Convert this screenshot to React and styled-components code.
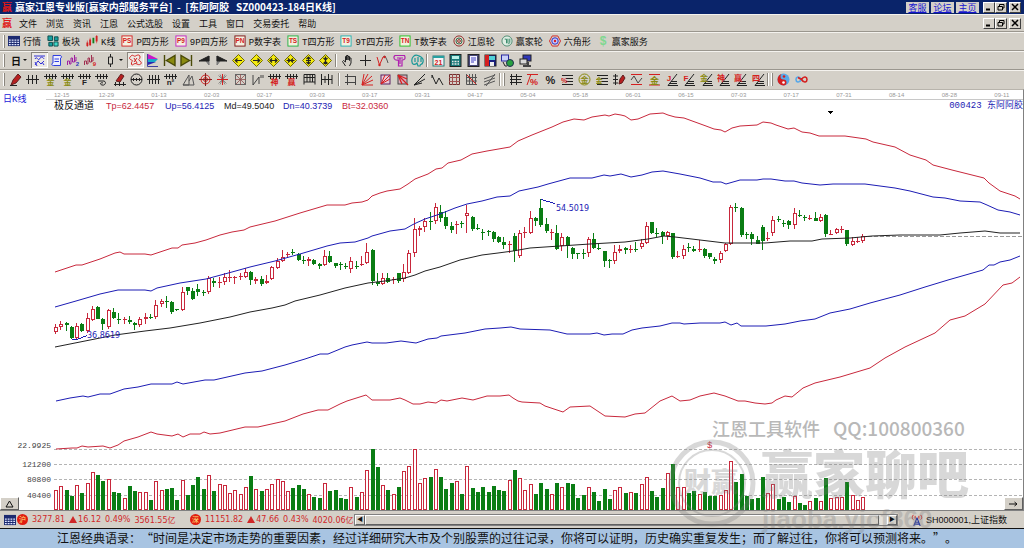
import React from 'react';
import styled, { createGlobalStyle } from 'styled-components';

const UP = '#c8283c';
const DOWN = '#0a7d14';
const BLUE = '#1c1cb4';

// direction, body top, body bottom, high, low, volume
const CANDLES = `
r 327 332 324 334 19;r 324 327 321 330 23;g 323 325 322 331 20;g 327 338 326 339 14;r 326 338 323 339 24
g 324 331 323 332 17;r 318 331 313 333 26;r 309 320 306 321 37;g 307 319 306 319 35;g 319 324 318 330 29
r 310 327 309 329 30;g 312 318 308 319 18;g 319 320 313 324 17;r 319 320 317 324 11;g 320 322 316 324 24
g 323 325 322 330 19;r 319 325 317 327 17;r 317 319 313 324 17;g 317 318 314 319 10;r 305 317 300 319 28
r 301 304 299 307 19;g 301 302 296 308 21;g 302 312 301 314 22;g 309 310 309 311 10;r 292 310 287 311 29
g 287 291 287 295 15;g 291 299 288 300 25;g 289 292 284 296 33;g 292 293 290 296 21;r 278 292 276 294 34
g 281 283 278 287 19;r 282 283 277 288 25;r 277 282 273 285 24;r 277 278 270 282 16;r 277 278 276 284 19
r 276 277 273 280 15;r 272 277 268 278 22;g 272 280 271 285 34;r 279 281 277 284 20;g 279 284 276 286 19
r 281 283 275 284 20;r 267 279 266 280 25;r 261 268 258 269 30;r 257 261 250 262 28;r 254 255 252 257 18
g 252 253 249 255 22;g 254 260 253 261 25;g 260 261 256 264 21;r 259 261 257 266 15;g 260 264 259 265 13
g 264 266 263 269 12;r 256 265 250 266 26;g 256 262 251 263 19;g 263 266 263 268 20;g 264 265 262 270 12
g 266 267 263 269 11;r 261 269 257 273 22;g 266 267 261 269 13;r 264 265 256 266 17;r 252 263 243 264 39
g 250 281 249 285 61;g 282 284 273 286 43;r 278 284 273 285 24;g 278 282 273 283 20;r 279 280 277 284 15
g 273 281 273 283 23;r 272 279 264 282 38;r 253 273 250 274 43;r 229 253 218 257 60;r 228 230 226 236 26
r 221 227 218 232 31;g 221 222 212 230 33;r 207 221 203 224 40;g 212 218 205 222 33;g 217 226 211 229 21
g 226 230 222 233 27;r 224 225 221 234 28;g 223 224 221 228 16;r 213 216 205 233 43;g 217 229 216 231 22
g 228 229 224 230 18;g 232 233 229 240 23;g 231 232 230 236 18;g 232 239 231 242 24;g 237 242 236 243 20
g 242 245 237 249 19;r 244 245 241 253 29;g 236 251 233 262 40;r 233 256 230 258 31;r 232 233 227 238 19
r 218 233 211 234 25;g 218 221 217 226 16;g 208 225 199 227 27;g 224 231 218 233 21;r 232 233 229 240 15
g 233 249 225 250 27;r 237 246 233 251 22;g 237 246 236 258 27;g 248 254 247 259 26;g 253 254 253 259 12
g 253 254 249 259 15;r 239 253 237 257 22;g 239 248 233 249 18;g 248 249 244 250 9;g 251 261 251 267 21
g 260 261 259 268 11;r 252 261 245 264 19;r 249 251 245 253 22;g 248 250 247 254 17;r 249 250 245 253 17
g 249 250 242 252 17;r 243 247 239 249 25;r 226 243 222 244 32;g 222 233 222 234 19;g 233 234 228 237 13
g 232 236 231 244 22;r 232 236 231 240 36;g 233 257 233 259 46;r 256 257 251 258 22;r 249 256 245 259 22
g 247 248 243 252 17;g 249 251 246 252 19;r 249 250 240 252 15;g 249 256 248 258 18;g 253 257 253 259 14
g 259 261 257 264 14;r 253 260 251 263 14;r 244 251 243 252 19;r 207 244 205 245 48;g 207 208 203 212 28
g 208 235 207 237 36;g 234 235 232 239 14;g 234 239 232 245 11;g 240 244 236 244 12;g 227 241 225 250 33
r 238 239 232 241 16;r 220 233 216 236 25;g 219 220 216 222 11;g 223 224 220 227 13;g 221 225 220 229 8
r 213 225 208 229 13;g 215 216 210 217 7;g 217 218 215 221 5;r 218 219 215 220 8;g 218 221 212 221 12
r 217 221 214 222 8;g 215 234 214 237 32;r 234 235 230 235 11;r 229 233 228 234 12;r 229 230 226 233 12
g 230 244 230 246 28;r 241 245 237 246 14;r 241 242 237 243 9;r 236 241 234 243 12
`.trim().split(/[;\n]/).map((row) => {
  const [dir, ...n] = row.split(' ');
  const [top, bottom, high, low, volume] = n.map(Number);
  return { dir, top, bottom, high, low, volume };
});

const BANDS = [
  { name: 'Tp', color: UP, points: '55,272 76,265 82,265 100,259 115,253 120,252 124,254 145,254 151,255 160,252 172,248 178,248 182,245 195,243 206,240 220,235 232,232 244,230 250,227 275,221 300,213 327,205 345,205 352,203 362,202 368,200 372,196 380,193 387,191 400,189 408,184 415,179 428,174 436,169 442,168 448,163 461,160 472,154 487,151 510,147 518,141 532,135 542,131 552,127 563,122 574,119 584,120 592,117 605,115 609,116 615,114 621,115 625,116 631,120 638,119 650,114 663,113 668,115 675,117 684,118 695,122 706,126 714,129 721,130 725,132 732,128 740,126 757,125 763,122 771,123 776,125 788,129 794,128 802,132 810,133 819,136 845,136 866,139 873,142 895,147 910,155 926,160 933,165 952,170 984,178 989,183 1000,191 1015,196 1020,199' },
  { name: 'Up', color: BLUE, points: '55,307 76,301 100,294 118,290 145,290 151,291 157,288 180,283 206,279 232,272 250,267 275,261 300,254 327,246 340,243 355,242 368,238 372,236 390,231 405,229 412,225 416,223 425,219 440,214 455,208 467,204 482,201 497,197 510,196 519,191 538,187 548,184 570,178 592,178 604,175 610,176 621,174 631,177 642,175 652,172 663,171 680,174 700,178 713,182 721,182 726,184 740,180 757,180 763,179 771,179 785,181 794,181 802,183 820,185 833,184 865,184 895,188 910,191 933,197 945,198 960,201 980,202 987,205 998,210 1010,212 1020,215' },
  { name: 'Md', color: '#222', points: '55,347 75,343 100,338 115,335 145,331 170,328 200,323 230,317 250,312 272,308 285,305 295,301 320,295 345,288 368,283 385,281 405,278 415,275 425,271 440,267 460,260 482,255 498,253 513,251 530,248 560,246 590,244 625,242 648,239 664,236 675,237 700,240 725,243 765,243 790,241 812,241 822,239 850,238 872,236 900,235 940,235 960,233 985,231 1000,233 1020,233' },
  { name: 'Dn', color: BLUE, points: '56,401 70,398 83,396 88,397 100,394 110,394 124,389 138,387 151,384 172,384 177,382 183,384 205,380 214,380 245,373 262,371 285,365 305,359 320,354 328,354 345,347 352,345 367,342 372,343 386,343 401,341 416,343 428,339 437,338 441,336 465,333 485,329 500,328 511,327 520,329 550,330 567,334 590,334 597,333 604,335 612,334 623,334 632,330 642,328 660,326 672,323 680,323 684,324 700,323 720,323 725,322 731,325 737,323 741,326 766,326 785,324 800,321 815,319 830,313 850,309 870,303 900,295 925,287 948,280 983,270 989,265 994,265 1000,262 1010,260 1020,256' },
  { name: 'Bt', color: UP, points: '56,449 72,448 77,448 82,446 88,447 103,446 110,448 118,445 124,441 138,437 151,432 157,434 172,436 178,434 183,437 190,434 200,434 204,432 210,434 220,433 245,427 258,427 285,421 303,414 318,410 328,410 340,404 347,401 366,395 372,400 390,400 400,398 405,400 413,404 420,404 428,402 436,403 441,400 447,401 462,398 473,400 487,396 500,396 509,395 513,398 518,401 522,402 540,403 545,406 557,410 563,412 570,407 590,406 605,416 625,417 635,414 645,413 660,401 672,396 680,401 690,400 700,396 714,393 725,396 738,401 745,401 755,403 765,404 772,403 776,400 785,396 792,397 803,388 815,383 840,377 870,368 885,358 905,347 935,333 950,320 965,316 985,304 1003,285 1012,283 1020,277' },
];

const DATES = ['12-15', '12-29', '01-13', '02-03', '02-17', '03-03', '03-17', '03-31', '04-17', '05-04', '05-18', '06-01', '06-15', '07-03', '07-17', '07-31', '08-14', '08-28', '09-11'];
const MENUS = ['文件', '浏览', '资讯', '江恩', '公式选股', '设置', '工具', '窗口', '交易委托', '帮助'];
const LEVELS = [[449, '22.9925'], [464, '121200'], [479, '80800'], [495, '40400']];

/* ---------- icons, all on a 13 x 13 grid ---------- */

const K = '#222';
const R = '#d42020';
const OLIVE = '#8a8a10';
const COMB = 'M0 3.5H13M2.5 1V6M5.5 1V6M8.5 1V6M11.5 1V6';

const P = ({ d, c = K, f = 'none', w = 1 }) => <path d={d} stroke={c} fill={f} strokeWidth={w} />;
const T = ({ children, c = K, x = 6.5, y = 12, s = 8 }) => (
  <text x={x} y={y} fill={c} fontSize={s} fontWeight="700" textAnchor="middle">{children}</text>
);
const Tagged = ({ text, edge, ink = R }) => (
  <>
    <rect x="1" y="1" width="11" height="11" fill="#f4f0e0" stroke={edge} />
    <T c={ink} y={9} s={7}>{text}</T>
  </>
);
const Diamond = ({ d }) => (
  <>
    <P d="M6.5 .5L12.5 6.5L6.5 12.5L.5 6.5Z" c="#6e6a00" f="#f4ea10" />
    <P d={d} w={1.2} />
  </>
);
const Comb = ({ text, c }) => (
  <>
    <P d={COMB} />
    <T c={c}>{text}</T>
  </>
);
const Fan = ({ text, c }) => (
  <>
    <P d="M3 12.5H13M4 10.5H12M6 8.5H12M3 12.5L12 1" />
    <T c={c} x={4} y={8}>{text}</T>
  </>
);
const Lines = 'M1 2.5H12M5 5.5H12M5 8.5H12M1 11.5H12';

const ICONS = {
  grid: <><rect x="0" y="1" width="13" height="11" fill="#1c2a70" /><P d="M1 5.5H12M1 8H12M1 10.5H12" c="#dfe6ff" w={1.3} /><P d="M3.5 4V12M6.5 4V12M9.5 4V12" c="#1c2a70" /></>,
  blocks: <><P d="M1 1H6V6H1ZM8 2H12V6H8ZM2 8H6V12H2Z" f="#18a0a0" c="#0b4a4a" /><P d="M7.5 7.5H12V12H7.5Z" f="#40d8c8" c="#0b4a4a" /></>,
  kline: <><P d="M1.5 8V12M4.5 5V11" c={R} w={2} /><P d="M8 3V9" c="#108020" w={2} /><P d="M11.5 1V7" c={R} w={2} /><P d="M1.5 6V13M4.5 3V12M11.500 0V9" c={R} w={0.6} /></>,
  ps: <Tagged text="PS" edge={R} />,
  p9: <Tagged text="P9" edge="#c020c0" />,
  pn: <Tagged text="PN" edge="#7a1010" />,
  ts: <Tagged text="TS" edge="#20b040" />,
  t9: <Tagged text="T9" edge="#20b0b0" />,
  tn: <Tagged text="TN" edge="#20c020" />,
  wheel: <><circle cx="6.5" cy="6.5" r="5.5" fill="#e8dccf" stroke="#8a2020" /><circle cx="6.5" cy="6.5" r="3.3" fill="none" stroke="#206040" /><circle cx="6.5" cy="6.5" r="1.5" fill="none" stroke="#8a2020" /></>,
  winWheel: <><circle cx="6.5" cy="6.5" r="5.5" fill="#dfeee4" stroke="#4a8a70" /><P d="M4 4.5H6V9M7.5 4V9M9.5 4V8L8 10" c="#2a8060" /></>,
  hex: <><P d="M3.5 1H9.5L12.5 6.5L9.5 12H3.5L.5 6.5Z" c={R} /><circle cx="6.5" cy="6.5" r="3.5" fill="#c8c8ff" stroke="#2828c0" /><circle cx="6.5" cy="6.5" r="1.3" fill={R} /></>,
  dollar: <T c="#7fd890" s={13} y={11}>$</T>,

  swirl: <P d="M1 2H12M2 5C4 1 5 8 6.5 5S10 3 11 5M2 11L5 7L8 10L11 7M2 8L4 12M11 11L9 8" c="#3030d8" />,
  scroll: <><P d="M3 1.5H10C12 1.5 12 4 10.5 4V11.5H3.5C1 11.5 1.5 9 3 9Z" c="#3040e0" f="#eef" /><P d="M4.5 5H9M4.5 7.5H9" c="#3040e0" /></>,
  wave2: <><P d="M.5 11V7H2.5V10H4V4H5.5V8H7.5V1V7H9V3" c="#a020a0" /><T s={6} x={10.5} c="#3030c0">2</T></>,
  wave9: <><P d="M.5 11V7H2.5V10H4V4H5.5V8H7.5V1V7H9V3" c="#a03050" /><T s={6} x={10.5} c={R}>9</T></>,
  candle: <P d="M6.5 0V3M6.5 10V13M4.5 3H8.5V10H4.5Z" />,
  cloud: <P d="M2 2C4 0 5 3 6.5 2S11 0 11 3S8 5 11 7S11 12 8 10S3 13 2.5 10S5 7 2.5 6S0 4 2 2ZM5 4L8 9M8 4L5 8" c={R} />,
  flag: <><P d="M2 0L12 5H2Z" c="none" f="#c818c8" /><P d="M2 5H12L9 8H2Z" c="none" f="#18a8c8" /><P d="M2 8H10L2 11Z" c="none" f="#2828b0" /><P d="M1.5 0V12.5H12" c="#4040a0" /></>,

  first: <P d="M1.5 1V12M12 1.5V11.5L3.5 6.5Z" f={OLIVE} c="#4a4a08" w={1.4} />,
  last: <P d="M11.5 1V12M1 1.5V11.5L9.5 6.5Z" f={OLIVE} c="#4a4a08" w={1.4} />,
  prev: <><P d="M11 2V11L8 7Z" f="#888" c="#777" /><P d="M1 7L11 2V7Z" f={K} /></>,
  next: <><P d="M2 2V11L5 7Z" f="#888" c="#777" /><P d="M12 7L2 2V7Z" f={K} /></>,
  dLeft: <Diamond d="M3 6.5H10M5.5 4.5L3.3 6.5L5.5 8.5" />,
  dRight: <Diamond d="M3 6.5H10M7.5 4.5L9.7 6.5L7.5 8.5" />,
  dWide: <Diamond d="M3 6.5H10M5 4.5L3 6.5L5 8.5M8 4.5L10 6.5L8 8.5" />,
  dNarrow: <Diamond d="M2.5 6.5H10.5M4 4.5L6 6.5L4 8.5M9 4.5L7 6.5L9 8.5" />,
  dTall: <Diamond d="M6.5 3V10M4.5 5L6.5 3L8.5 5M4.5 8L6.5 10L8.5 8M4 6.5H9" />,
  dShort: <Diamond d="M6.5 2.5V10.5M4.5 4L6.5 6L8.5 4M4.5 9.5L6.5 7.5L8.5 9.5" />,
  hand: <P d="M4.5 12L1.5 7.5L2.5 6.5L4.5 8V2.5H5.5V6M5.5 6V1.5H7V6M7 6V2.5H8.5V6.5M8.5 6.5V4H10V9L8.5 12" />,
  cross: <P d="M6.5 1V12M1 6.5H12" />,
  zigzag: <><P d="M1 3L3.5 11L7 3" c={R} /><P d="M7 3L9 2L11 6L12 9" c="#555" /><circle cx="3.5" cy="11" r="1.2" fill={R} /><circle cx="8.5" cy="3" r="1.2" fill={R} /></>,
  brainPink: <P d="M2 1.5H11.5C13 5 11 6 9 6V12H5.5V6C1 7 0 3 2 1.5ZM4 4H10M7 4V10" c="#b020b0" w={1.2} />,
  brainTeal: <P d="M1 8C0 3 4 0 7 1.5S13 4 12 8S9 9 9 12H7L6 9C4 11 1 11 1 8ZM4 4V8M7 3V8M10 4V8" c="#189898" w={1.2} />,
  calendar: <><rect x="1" y="2" width="11" height="10" fill="#f4f4f4" stroke="#287878" /><P d="M1 3H12" c="#28a0a0" w={2} /><T c={R} s={7} y={11}>21</T></>,
  calc: <><rect x="1" y="0.5" width="11" height="12" fill="#187878" stroke={K} /><rect x="3" y="2" width="7" height="3" fill="#b8f0e8" /><P d="M3 7.5H10M3 10H10" c="#e8e8e8" w={1.4} /><P d="M5 6V12M8 6V12" c="#187878" /></>,
  note: <><rect x="1" y="0.5" width="11" height="12" fill="#484878" stroke={K} /><rect x="3" y="2" width="7" height="9" fill="#f4f4ff" /><P d="M4 4H9M4 6H9M4 8H7" c="#4040c0" /></>,
  save: <><rect x="1" y="1" width="11" height="11" fill="#1c2080" stroke={K} /><rect x="1" y="1" width="4" height="11" fill={R} /><rect x="5" y="2" width="6" height="4" fill="#50d0d8" /><rect x="6" y="8" width="4" height="4" fill="#eee" /></>,
  globe: <><rect x="0.5" y="1" width="7" height="6" fill="#c8d0f8" stroke="#2828a0" /><circle cx="9" cy="9" r="3.5" fill="#28a040" stroke="#203050" /><P d="M2 8L4 12H6" /></>,
  screens: <><rect x="4" y="1" width="8" height="6" fill="#3038b8" stroke={K} /><rect x="1" y="5" width="7" height="5" fill="#d8d8d8" stroke={K} /><P d="M4 12H12M9 8V12" w={2} c="#444" /></>,

  pen: <><P d="M2 12L4 7L9 1L12 4L7 10Z" f="#b82020" c="#602020" /><P d="M1 12.5H8" /></>,
  comb: <P d="M0 6.5H13M2.5 2V11M6.5 2V11M10.5 2V11" />,
  combGold: <Comb text="金" c={OLIVE} />,
  combF: <Comb text="F" />,
  combS: <><P d={COMB} /><P d="M3 8H9C12 9 10 13 7 12S6 9 8 10" /></>,
  penRuler: <><P d="M3 8L8 1L11 3L7 9Z" f="#b82020" c="#602020" /><P d="M1 11.5H13M2.5 9V13M6.5 9V13M10.5 9V13" /></>,
  combCircle: <><circle cx="6.5" cy="6.5" r="5.5" fill="none" stroke={K} /><P d="M1 6.5H12M3.5 5V8M6.5 5V8M9.5 5V8" /></>,
  comb4: <P d="M0 6.5H13M2.5 2V11M5.5 2V11M8.5 2V11M11.5 2V11" />,
  combN: <Comb text="n²" />,
  sails: <P d="M1 12L7 2V12ZM1 12H12L10 3L7 8" c="#555" />,
  target: <><circle cx="6.5" cy="6.5" r="4.5" fill="none" stroke={R} /><circle cx="6.5" cy="6.5" r="2" fill="none" stroke={R} /><P d="M6.5 0V13M0 6.5H13" c="#802020" /></>,
  star: <><P d="M2.5 2.5L10.5 10.5M10.5 2.5L2.5 10.5M4 1.5L9 11.5M9 1.5L4 11.5" c="#777" w={0.8} /><P d="M6.5 1V12M1 6.5H12" c={R} /></>,
  web: <><rect x="1.5" y="1.5" width="10" height="10" fill="none" stroke="#666" /><P d="M1 6.5H12M6.5 1V12M2 2L11 11M11 2L2 11" c="#905050" w={0.8} /></>,
  marks: <P d="M2 2V12M2 12L8 4V11M10 2V5M12 2V5" c="#444" />,
  combShen: <Comb text="神" c={R} />,
  combYing: <Comb text="赢" c={R} />,
  frame: <P d="M1 11.5V1.5H12V11.5M1 4.5H12M1 9H12M4 2V9M7 2V9M9.5 2V9" />,
  gate: <P d="M1.5 1V12M5 3V10M8.5 1V12M12 2V11M1 6.5H12" />,
  box: <P d="M3.5 1V12M1 3.5H11.5V9.5H1M11.500 3V12" c="#444" />,
  fanRed: <P d="M1 12L3 1M1 12L7 1M1 12L11 3M1 12L12 7M1 12H12" c={R} />,
  boxFan: <><rect x="2" y="2" width="9" height="9" fill="#e8c8d8" stroke="#5a2060" /><P d="M2 11L11 2M2 11L6 2M2 11L11 6" c={R} /></>,
  boxFan2: <><rect x="2" y="2" width="9" height="9" fill="#d8b0c0" stroke="#444" /><P d="M2 2L12 12M2 2L11 6M2 2L6 11" c={R} w={1.3} /></>,
  fanThin: <P d="M1 12L12 1M1 12L12 6M1 12L9 10" />,
  vee: <P d="M1 2L5 11L8 5L12 12M1 2V5" />,
  gridRed: <><P d="M1.5 1.5H11.5V11.5H1.5Z" c="#703030" /><P d="M4.5 1V12M8.5 1V12M1 4.5H12M1 8.5H12" c="#a05050" /></>,
  gridPen: <><P d="M1.5 1V11.5H12M4.5 1V12M7.5 1V12M10.5 1V12M1 4.5H12M1 8H12" c="#555" /><P d="M2 2L11 11" c={R} /></>,
  bundle: <P d="M1 12L12 8M1 9L12 5M1 6L12 2M3 13L12 1" c="#555" />,
  ladder: <P d="M2.5 1V12M7.5 1V12M1 3.5H13M1 6.5H12M1 9.5H13" />,
  pctRed: <><P d="M1 1.5H12M5 1L1 12" c={R} /><T c={R} s={9} x={8}>%</T></>,
  pct: <text x="6.5" y="11" fontSize="11" textAnchor="middle" fill={K}>%</text>,
  pctLines: <><P d={Lines} /><T c={R} s={7} x={3} y={10}>%</T></>,
  goldRing: <><circle cx="6.5" cy="6.5" r="5.5" fill="none" stroke={OLIVE} /><T c={OLIVE} s={8} y={9.5}>金</T></>,
  goldLines: <><P d={Lines} /><T c={OLIVE} s={7} x={3} y={10}>金</T></>,
  penLines: <><P d="M2.5 1V12M0 3H5M0 6.5H5M0 10H5" /><P d="M6 11L7 6L10 2L12 5L9 10Z" f="#b82020" c="#602020" /></>,
  waveBox: <><P d="M1 1.5H12M1 11.5H12" c={R} /><P d="M1 7L4 3L8 10L12 5" c="#444" /></>,
  goldBar: <><P d="M1 1.5H12M1 12H12" c={R} /><T c={OLIVE} s={9} y={10.5}>金</T></>,
  fanJ: <Fan text="J" c={R} />,
  fanF: <Fan text="F" c={R} />,
  fanGold: <Fan text="金" c={OLIVE} />,
  fanShen: <Fan text="神" c={R} />,
  fanYing: <Fan text="赢" c={R} />,
  fanFour: <Fan text="四" c={R} />,
  taiji: <><circle cx="6.5" cy="6.5" r="6" fill="#58a8e8" /><P d="M6.5 .5A6 6 0 0 0 6.5 12.5A3 3 0 0 0 6.5 6.5A3 3 0 0 1 6.5 .5Z" c="none" f={R} /><circle cx="6.5" cy="9.5" r="1.3" fill="#fff" /><circle cx="7" cy="3.5" r="1.3" fill={R} /></>,
  infinity: <><P d="M6.5 6.5C4 2.5 1 4 1 6.5S4 10.5 6.5 6.5" c="#58a8e8" w={1.6} /><P d="M3 4.5L6.500 6.5C9 10.5 12 9 12 6.5S9 2.5 6.5 6.5" c={R} w={1.6} /></>,
  antenna: <><P d="M6.5 4L3 13M6.5 4L10 13M4.5 9H8.5M4 11H9.5" c="#2838a0" w={1.2} /><P d="M2.5 1C1 3 1 5 2.5 6M10.5 1C12 3 12 5 10.5 6M4.5 2V5M8.5 2V5" c={R} /></>,
};

const QUICK = [
  ['grid', '行情'], ['blocks', '板块'], ['kline', 'K线'], ['ps', 'P四方形'], ['p9', '9P四方形'], ['pn', 'P数字表'], ['ts', 'T四方形'],
  ['t9', '9T四方形'], ['tn', 'T数字表'], ['wheel', '江恩轮'], ['winWheel', '赢家轮'], ['hex', '六角形'], ['dollar', '赢家服务'],
];
const NAV = ['first', 'last', 'prev', 'next', 'dLeft', 'dRight', 'dWide', 'dNarrow', 'dTall', 'dShort'];
const CURSORS = ['hand', 'cross', 'zigzag', 'brainPink', 'brainTeal'];
const UTILS = ['calendar', 'calc', 'note', 'save', 'globe', 'screens'];
const DRAW_A = ['pen', 'comb', 'combGold', 'combGold', 'combF', 'combS', 'penRuler', 'combCircle', 'comb4', 'combN', 'sails', 'target', 'star', 'web', 'marks', 'combShen', 'combYing', 'frame', 'gate'];
const DRAW_B = ['box', 'fanRed', 'boxFan', 'boxFan2', 'fanThin', 'vee', 'gridRed', 'gridPen', 'bundle'];
const DRAW_C = ['ladder', 'pctRed', 'pct', 'pctLines', 'goldRing', 'goldLines', 'penLines', 'waveBox', 'goldBar', 'fanJ', 'fanF', 'fanGold', 'fanShen', 'fanYing', 'fanFour'];

/* ---------- styles ---------- */

const GlobalStyle = createGlobalStyle`
  * { box-sizing: border-box; }
  body {
    margin: 0;
    background: #d4d0c8;
    color: #111;
    font-family: "Liberation Mono", "Noto Sans CJK SC", monospace;
    font-size: 9px;
  }
  button {
    border: 0;
    padding: 0;
    background: none;
    color: inherit;
    font: inherit;
  }
`;

const Page = styled.div`
  position: relative;
  overflow: hidden;
`;

const TitleBar = styled.header`
  display: flex;
  align-items: center;
  height: 14px;
  padding: 0 3px 0 2px;
  background: #0a246a;
  color: #fff;
`;

const Title = styled.h1`
  flex: 1;
  margin: 0 0 0 3px;
  font-family: "Noto Sans CJK SC", sans-serif;
  font-size: 10px;
  line-height: 14px;
  white-space: pre;
`;

const Logo = styled.span`
  color: #e01818;
  font-family: "Noto Sans CJK SC", sans-serif;
  font-size: 10px;
  font-weight: 700;
  line-height: 14px;
`;

const TitleLink = styled.a`
  width: 23px;
  height: 11px;
  margin-right: 2px;
  background: #d4d0c8;
  color: #1414d0;
  font-family: "Noto Sans CJK SC", sans-serif;
  font-size: 9px;
  line-height: 11px;
  text-align: center;
`;

const WindowButtons = styled.div`
  display: flex;
  margin-left: 2px;
`;

const WindowButton = styled.button`
  display: flex;
  width: 12px;
  height: 11px;
  align-items: center;
  justify-content: center;
  border: 1px solid;
  border-color: #fff #404040 #404040 #fff;
  background: #d4d0c8;

  &:last-child { margin-left: 2px; }
`;

const MenuBar = styled.nav`
  display: flex;
  align-items: center;
  height: 17px;
  padding: 0 3px 0 2px;
  border-top: 1px solid #f4f2ee;
`;

const MenuList = styled.div`
  display: flex;
  flex: 1;
  gap: 9px;
  margin-left: 7px;
`;

const Toolbar = styled.div`
  display: flex;
  align-items: center;
  height: ${(p) => p.$height || 19}px;
  padding-left: 3px;
  border-top: 1px solid #9a968e;
  box-shadow: inset 0 1px #f4f2ee;
`;

const Grip = styled.span`
  width: 2px;
  height: 13px;
  margin: 0 2px 0 ${(p) => p.$before || 0}px;
  border-left: 1px solid ${(p) => (p.$line ? '#8a867e' : '#fff')};
  border-right: 1px solid ${(p) => (p.$line ? '#fff' : '#8a867e')};
`;

const QuickList = styled.div`
  display: flex;
  gap: 6px;
  margin-left: 1px;
`;

const QuickButton = styled.button`
  display: flex;
  align-items: center;
  gap: 3px;
  white-space: nowrap;
`;

const ToolGroup = styled.div`
  display: grid;
  grid-auto-flow: column;
  grid-auto-columns: 1fr;
  width: ${(p) => p.$width}px;
`;

const ToolButton = styled.button`
  display: flex;
  height: 16px;
  align-items: center;
  justify-content: center;
  gap: 2px;
  background: ${(p) => (p.$pressed ? '#ece9e4' : 'none')};
  box-shadow: ${(p) => (p.$pressed ? 'inset 1px 1px #8a867e, inset -1px -1px #fff' : 'none')};
  font-size: 10px;
  font-weight: 700;
`;

const ModeGroup = styled.div`
  display: grid;
  grid-template-columns: 24px 17px 17px 17px 17px 28px 17px 17px;
  width: 154px;
`;

const Arrow = styled.span`
  border: 2px solid transparent;
  border-top-color: #111;
  border-bottom: 0;
`;

const ChartPanel = styled.main`
  position: relative;
  background: #fff;
  border-top: 1px solid #b8b4ac;
  border-right: 1px solid #808080;
  border-bottom: 1px solid #808080;
`;

const DateAxis = styled.div`
  display: grid;
  grid-template-columns: repeat(19, 1fr);
  height: 10px;
  margin: 0 -24px 0 46px;
  border-bottom: 1px solid #c8c8c8;
  color: #999;
  font-family: "Liberation Sans", sans-serif;
  font-size: 6px;
  line-height: 11px;

  span:first-child { padding-left: 8px; }
`;

const AxisClip = styled.div`
  overflow: hidden;
`;

const Legend = styled.div`
  display: flex;
  height: 10px;
  padding-left: 54px;
  font-family: "Liberation Sans", "Noto Sans CJK SC", sans-serif;
  line-height: 12px;
`;

const LegendName = styled.span`
  width: 52px;
  font-size: 10px;
  line-height: 12px;
`;

const LegendValue = styled.span`
  width: 59px;
  color: ${(p) => p.$color};
  font-size: 9px;
`;

const StockName = styled.span`
  margin-left: auto;
  color: ${BLUE};
  font-family: "Liberation Mono", "Noto Sans CJK SC", monospace;
  white-space: nowrap;
`;

const PeriodTag = styled.span`
  position: absolute;
  top: 4px;
  left: 3px;
  color: #1a1ad8;
  line-height: 12px;
`;

const Plot = styled.svg`
  display: block;
  width: 100%;
  height: auto;
  shape-rendering: crispEdges;
`;

const CornerButton = styled.button`
  position: absolute;
  display: flex;
  bottom: 0;
  ${(p) => p.$side}: 0;
  width: 19px;
  height: 13px;
  align-items: center;
  justify-content: center;
  border: 1px solid;
  border-color: #fff #606060 #606060 #fff;
  background: #d4d0c8;
`;

const StatusBar = styled.footer`
  display: grid;
  grid-template-columns: 354px 1fr 126px;
  height: 17px;
  align-items: center;
`;

const Tickers = styled.div`
  display: flex;
  align-items: center;
  overflow: hidden;
  padding-left: 4px;
  color: #d02828;
  font-family: "DejaVu Sans", "Noto Sans CJK SC", sans-serif;
  font-size: 8px;
  white-space: nowrap;

  svg { flex: none; }
`;

const Badge = styled.span`
  flex: none;
  width: 11px;
  height: 11px;
  margin: 0 4px 0 1px;
  border-radius: 50%;
  background: #e01c10;
  color: #ffe880;
  font-family: "Noto Sans CJK SC", sans-serif;
  font-size: 7px;
  line-height: 11px;
  text-align: center;
`;

const Ticker = styled.span`
  display: flex;
  flex: none;
  width: 157px;
  align-items: center;
  gap: 4px;
`;

const Rise = styled.span`
  display: flex;
  align-items: center;

  &::before {
    content: "";
    margin-right: 1px;
    border: 4px solid transparent;
    border-top: 0;
    border-bottom: 7px solid #d02828;
  }
`;

const Scrollbar = styled.div`
  display: flex;
  height: 12px;
  border: 1px solid #808080;
  background: #e4e1db;
`;

const ScrollButton = styled.button`
  width: 10px;
  border: 1px solid;
  border-color: #fff #606060 #606060 #fff;
  background: #d4d0c8;
  font-size: 6px;
  line-height: 8px;
`;

const Thumb = styled.div`
  flex: 1;
  margin-right: 8px;
  border: 1px solid;
  border-color: #fff #606060 #606060 #fff;
  background: #d4d0c8;
`;

const IndexName = styled.div`
  display: flex;
  align-items: center;
  gap: 3px;
  padding-left: 13px;
  font-family: "Liberation Sans", "Noto Sans CJK SC", sans-serif;
  white-space: nowrap;
`;

const Quote = styled.p`
  margin: 0;
  height: 20px;
  padding-left: 57px;
  overflow: hidden;
  border-top: 1px solid #111;
  background: #a8c4e2;
  font-family: "Noto Sans CJK SC", sans-serif;
  font-size: 12px;
  line-height: 18px;
  text-spacing-trim: space-all;
  white-space: nowrap;
`;

const Watermark = styled.svg`
  position: absolute;
  right: 0;
  bottom: 0;
  width: 360px;
  height: 140px;
  pointer-events: none;
  font-family: "Noto Sans CJK SC", sans-serif;
`;

/* ---------- components ---------- */

const Icon = ({ name, size = 13 }) => (
  <svg width={size} height={size} viewBox="0 0 13 13" fontFamily="Liberation Sans, Noto Sans CJK SC, sans-serif" aria-hidden="true">
    {ICONS[name]}
  </svg>
);

const Tools = ({ names, width }) => (
  <ToolGroup $width={width}>
    {names.map((name, i) => (
      <ToolButton key={i} aria-label={name}><Icon name={name} /></ToolButton>
    ))}
  </ToolGroup>
);

const WindowControls = () => (
  <WindowButtons>
    <WindowButton aria-label="最小化"><svg width="8" height="8"><path d="M1 6.5H5" stroke="#000" strokeWidth="2" /></svg></WindowButton>
    <WindowButton aria-label="还原"><svg width="8" height="8"><path d="M2.5 3V1.5H7V5H5.5M1 3.5H5.5V7H1Z" stroke="#000" fill="none" /></svg></WindowButton>
    <WindowButton aria-label="关闭"><svg width="8" height="8"><path d="M1 1L7 7M7 1L1 7" stroke="#000" strokeWidth="1.5" /></svg></WindowButton>
  </WindowButtons>
);

const Candle = ({ data, index }) => {
  const x = Math.round(55 + index * 5.275);
  const { dir, top, bottom, high, low, volume } = data;
  const rising = dir === 'r';
  const color = rising ? UP : DOWN;
  const flat = bottom - top < 2;
  return (
    <g>
      <path d={`M${x + 0.5} ${high}V${top}M${x + 0.5} ${bottom}V${low}`} stroke={color} />
      {flat || !rising ? (
        <rect x={x - 1} y={top} width="4" height={bottom - top} fill={color} />
      ) : (
        <rect x={x - 0.5} y={top + 0.5} width="3" height={bottom - top - 1} fill="#fff" stroke={color} />
      )}
      {rising ? (
        <rect x={x - 0.5} y={509.5 - volume} width="3" height={volume} fill="#fff" stroke={color} />
      ) : (
        <rect x={x - 1} y={510 - volume} width="4" height={volume} fill={color} />
      )}
    </g>
  );
};

const Chart = () => (
  <Plot viewBox="0 110 1023 400" role="img" aria-label="日K线">
    {LEVELS.map(([y, label]) => (
      <g key={label}>
        <path d={`M54 ${y + 0.5}H1022`} stroke="#b4b4b4" strokeDasharray="3 2" />
        <text x="51" y={y === 449 ? 448 : y + 3} fontSize="8" fill="#444" textAnchor="end">{label}</text>
      </g>
    ))}
    <path d="M862 236.5H1022" stroke="#999" strokeDasharray="4 2" />
    {CANDLES.map((candle, i) => <Candle key={i} data={candle} index={i} />)}
    {BANDS.map((band) => (
      <polyline key={band.name} points={band.points} fill="none" stroke={band.color} shapeRendering="auto" />
    ))}
    <g fill={BLUE} stroke="none" fontFamily="DejaVu Sans" fontSize="8">
      <path d="M72 339.5H77L87 335.5M541 199.5L555 203.5" stroke={BLUE} fill="none" />
      <text x="87" y="338">36.8619</text>
      <text x="556" y="211">54.5019</text>
    </g>
    <path d="M828 111H833L830.5 114Z" fill="#000" />
    <text x="707" y="448" fontSize="9" fill={UP}>$</text>
  </Plot>
);

const App = () => (
  <Page>
    <GlobalStyle />
    <TitleBar>
      <Logo>赢</Logo>
      <Title>{'赢家江恩专业版[赢家内部服务平台]  -  [东阿阿胶   SZ000423-184日K线]'}</Title>
      <TitleLink href="#service">客服</TitleLink>
      <TitleLink href="#forum">论坛</TitleLink>
      <TitleLink href="#home">主页</TitleLink>
      <WindowControls />
    </TitleBar>

    <MenuBar>
      <Logo>赢</Logo>
      <MenuList>
        {MENUS.map((menu) => <button key={menu}>{menu}</button>)}
      </MenuList>
      <WindowControls />
    </MenuBar>

    <Toolbar>
      <Grip />
      <QuickList>
        {QUICK.map(([icon, label]) => (
          <QuickButton key={label}><Icon name={icon} size={12} />{label}</QuickButton>
        ))}
      </QuickList>
    </Toolbar>

    <Toolbar>
      <Grip />
      <ModeGroup>
        <ToolButton>日<Arrow /></ToolButton>
        <ToolButton $pressed aria-label="swirl"><Icon name="swirl" /></ToolButton>
        <ToolButton aria-label="scroll"><Icon name="scroll" /></ToolButton>
        <ToolButton aria-label="wave2"><Icon name="wave2" /></ToolButton>
        <ToolButton aria-label="wave9"><Icon name="wave9" /></ToolButton>
        <ToolButton aria-label="candle"><Icon name="candle" /><Arrow /></ToolButton>
        <ToolButton $pressed aria-label="cloud"><Icon name="cloud" /></ToolButton>
        <ToolButton aria-label="flag"><Icon name="flag" /></ToolButton>
      </ModeGroup>
      <Tools names={NAV} width={173} />
      <Grip $line $before={1} />
      <Tools names={CURSORS} width={87} />
      <Grip $line />
      <Tools names={UTILS} width={104} />
    </Toolbar>

    <Toolbar $height={20}>
      <Grip />
      <Tools names={DRAW_A} width={328} />
      <Grip $line $before={3} />
      <Tools names={DRAW_B} width={156} />
      <Grip $line $before={1} />
      <Grip />
      <Tools names={DRAW_C} width={260} />
      <Grip $line />
      <Grip />
      <Tools names={['taiji', 'infinity']} width={35} />
    </Toolbar>

    <ChartPanel>
      <PeriodTag>日K线</PeriodTag>
      <AxisClip>
        <DateAxis>
          {DATES.map((date) => <span key={date}>{date}</span>)}
        </DateAxis>
      </AxisClip>
      <Legend>
        <LegendName>极反通道</LegendName>
        <LegendValue $color={UP}>Tp=62.4457</LegendValue>
        <LegendValue $color={BLUE}>Up=56.4125</LegendValue>
        <LegendValue $color="#222">Md=49.5040</LegendValue>
        <LegendValue $color={BLUE}>Dn=40.3739</LegendValue>
        <LegendValue $color={UP}>Bt=32.0360</LegendValue>
        <StockName>000423 东阿阿胶</StockName>
      </Legend>
      <Chart />
      <CornerButton $side="left" aria-label="展开">
        <svg width="9" height="8"><path d="M4.5 1L8 7H1Z" fill="none" stroke="#111" /></svg>
      </CornerButton>
      <CornerButton $side="right" aria-label="向右">
        <svg width="9" height="8"><path d="M0 4H8M5.5 2L8 4L5.5 6" fill="none" stroke="#111" /></svg>
      </CornerButton>
    </ChartPanel>

    <StatusBar>
      <Tickers>
        <Icon name="grid" size={12} />
        <Badge>沪</Badge>
        <Ticker>
          <span>3277.81</span><Rise>16.12</Rise><span>0.49%</span><span>3561.55亿</span>
        </Ticker>
        <Badge>深</Badge>
        <Ticker>
          <span>11151.82</span><Rise>47.66</Rise><span>0.43%</span><span>4020.06亿</span>
        </Ticker>
      </Tickers>
      <Scrollbar>
        <ScrollButton aria-label="向左滚动">◀</ScrollButton>
        <Thumb />
        <ScrollButton aria-label="向右滚动">▶</ScrollButton>
      </Scrollbar>
      <IndexName><Icon name="antenna" size={12} />SH000001,上证指数</IndexName>
    </StatusBar>

    <Quote>江恩经典语录：“时间是决定市场走势的重要因素，经过详细研究大市及个别股票的过往记录，你将可以证明，历史确实重复发生；而了解过往，你将可以预测将来。”。</Quote>

    <Watermark viewBox="0 -10 360 140">
      <g fill="#808080" opacity="0.3">
        <circle cx="48" cy="65" r="41" fill="none" stroke="#808080" strokeWidth="5" />
        <circle cx="48" cy="65" r="33" fill="none" stroke="#808080" strokeWidth="2" />
        <text x="20" y="74" fontSize="27" fontWeight="900">财赢</text>
        <text x="97" y="76" fontSize="52" fontWeight="900">赢家聊吧</text>
        <text x="98" y="110" fontSize="26" fontWeight="700" fontFamily="Liberation Sans">jiaoba.yjcf360</text>
      </g>
      <text x="48" y="18" fontSize="18" fontWeight="500" fill="#b8b8b8">江恩工具软件</text>
      <text x="169" y="18" fontSize="19" fontWeight="500" fill="#b8b8b8">QQ:100800360</text>
    </Watermark>
  </Page>
);

export default App;
